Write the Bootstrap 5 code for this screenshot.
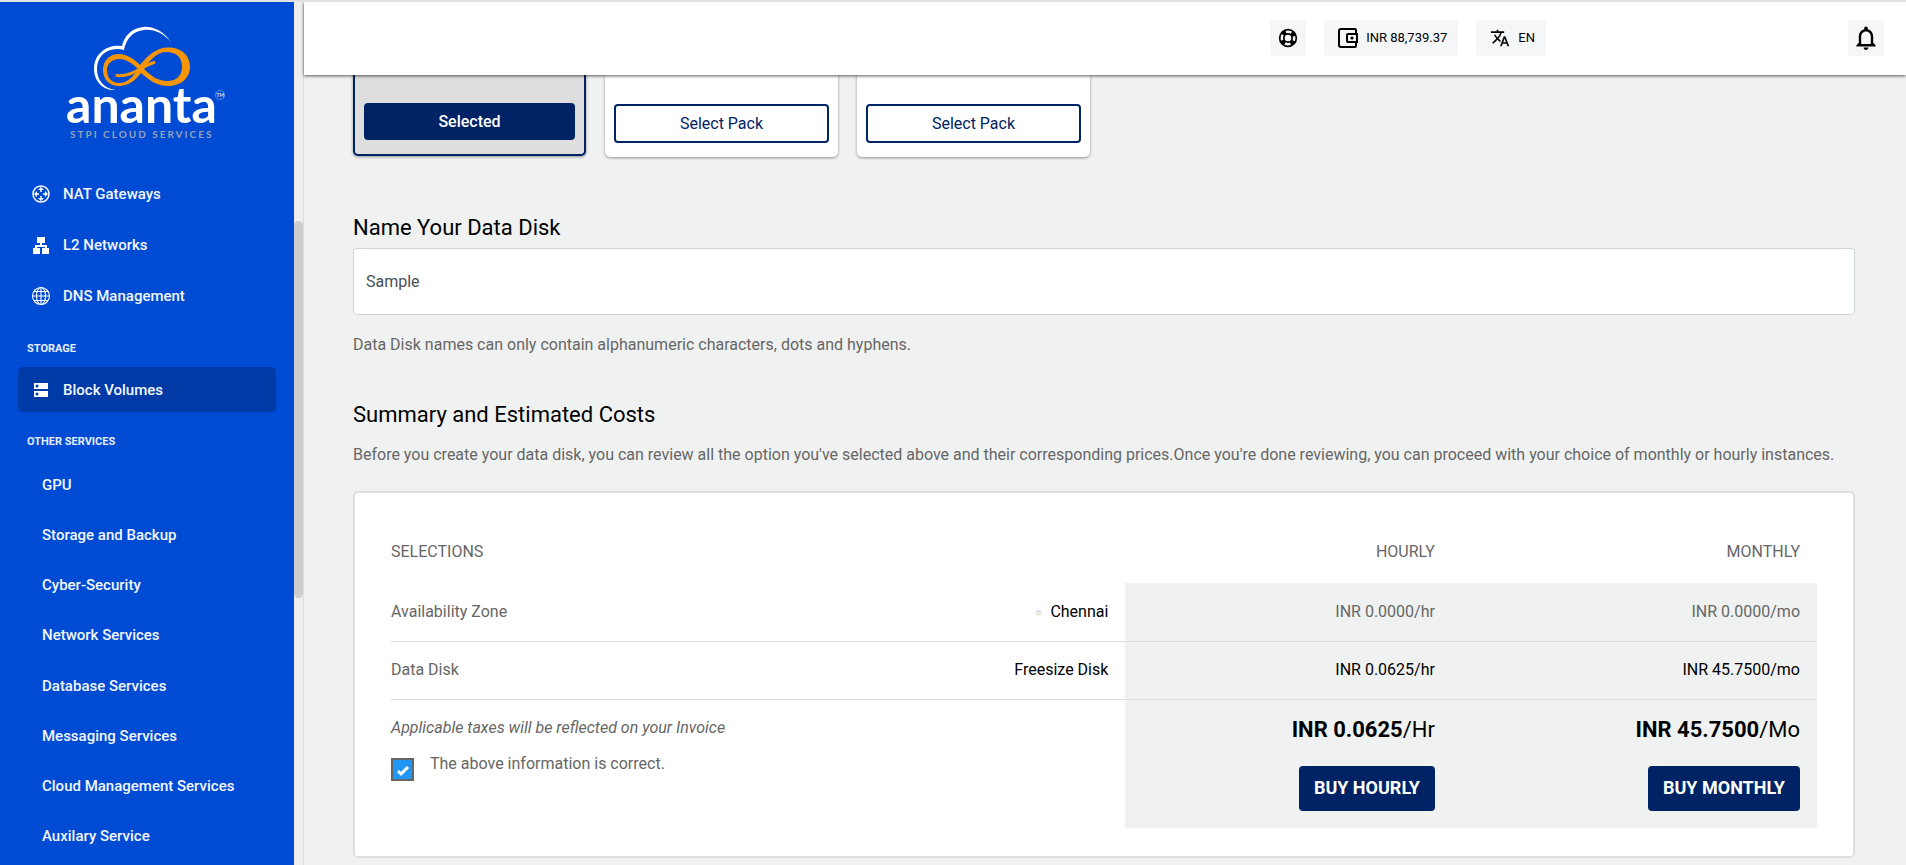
<!DOCTYPE html>
<html lang="en">
<head>
<meta charset="utf-8">
<meta name="viewport" content="width=device-width, initial-scale=1">
<title>Create Data Disk</title>
<link href="https://cdn.jsdelivr.net/npm/bootstrap@5.3.0/dist/css/bootstrap.min.css" rel="stylesheet">
<style>
  :root { --navy: #002366; --line: #dddfde; --canvas: #f0f2f1; --muted-ink: #666; }
  body { font-family: Roboto, "Liberation Sans", sans-serif; font-size: 16px; line-height: 24px; color: #000; background: var(--canvas); border-top: 2px solid #e1e2e1; }
  .side { width: 294px; background: #004bd3; }
  .side a { color: #f2f6ff; text-decoration: none; font-weight: 500; font-size: 15px; }
  .brand { height: 142px; padding-left: 64px; padding-top: 18px; }
  .main-link { height: 51px; padding-left: 31px; }
  .main-link svg, .picked svg { width: 20px; height: 20px; margin-right: 12px; flex: none; }
  .group-title { font-size: 11px; line-height: 16px; font-weight: 700; color: #e6eeff; margin: 0 0 10px 27px; }
  .group-first { margin-top: 4px; }
  .picked { height: 45px; margin: 0 18px 22px; padding-left: 13px; background: #003aa6; border-radius: 5px; }
  .sub-link { padding-left: 42px; }
  .track { width: 10px; background: #eee; border-right: 1px solid #dcdcdc; padding-top: 219px; }
  .thumb { height: 377px; width: 9px; background: #cdcdcd; border-radius: 5px; }
  .topbar { height: 73px; background: #fff; box-shadow: 0 1px 3px rgba(0,0,0,.65); z-index: 2; padding-right: 22px; padding-bottom: 1px; }
  .chip { height: 36px; border: 0; border-radius: 4px; background: #f5f6f8; font-size: 13px; color: #000; padding: 0 11px 0 14px; gap: 8px; }
  .chip svg { width: 20px; height: 20px; }
  .chip-icon { width: 36px; padding: 0; }
  .chip .bell { width: 24px; height: 24px; }
  .chips { gap: 18px; margin-right: 302px; }
  .content { padding: 0 51px 0 49px; }
  .pack { width: 233px; padding: 29px 9px 14px; background: #fff; border-radius: 0 0 5px 5px; box-shadow: 0 1px 3px rgba(0,0,0,.4); }
  .pack-on { border: 2px solid var(--navy); border-top: 0; background: #dedede; padding-top: 28px; }
  .packs { gap: 19px; margin-bottom: 57px; }
  .pack-btn { height: 39px; border: 2px solid var(--navy); border-radius: 4px; background: #fff; color: var(--navy); padding: 0; }
  .pack-on .pack-btn { height: 37px; background: var(--navy); color: #fff; font-weight: 500; }
  .title { font-size: 22px; line-height: 28px; font-weight: 400; margin: 0 0 6px; }
  .name-box { height: 67px; border: 1px solid #ced4da; border-radius: 4px; padding: 0 12px; font-size: 16px; color: #495057; }
  .note { color: var(--muted-ink); font-size: 16px; margin: 0; }
  .note-disk { margin: 18px 0 44px; }
  .title-sum { margin-bottom: 14px; }
  .summary { border: 2px solid var(--line); border-radius: 5px; background: #fff; padding: 36px 36px 28px; }
  .costs { width: 100%; table-layout: fixed; }
  .costs th, .costs td { padding: 0 17px 0 0; text-align: right; font-weight: 400; }
  .costs th:first-child { text-align: left; }
  .costs thead th { height: 54px; color: var(--muted-ink); padding-bottom: 8px; }
  .costs tbody tr { height: 58px; border-bottom: 1px solid var(--line); }
  .costs .price { background: var(--canvas); }
  .costs .soft { color: var(--muted-ink); }
  .costs tfoot td { vertical-align: top; height: 129px; padding-top: 16px; }
  .total { font-size: 22px; line-height: 28px; margin-bottom: 22px; }
  .buy { height: 45px; border: 0; border-radius: 4px; background: var(--navy); color: #fff; font-weight: 700; font-size: 18px; padding: 0 15px; }
  .tick { appearance: none; width: 23px; height: 23px; margin: 6px 16px 0 0; border: 2px solid #666; background: #2196f3 url("data:image/svg+xml,%3Csvg xmlns='http://www.w3.org/2000/svg' viewBox='0 0 19 19'%3E%3Cpath d='M5 11l3 3 7-7' fill='none' stroke='white' stroke-width='3'/%3E%3C/svg%3E"); }
</style>
</head>
<body class="vh-100 overflow-hidden d-flex">
<aside class="side d-flex flex-column flex-shrink-0">
  <a class="brand d-block" href="#" aria-label="Ananta STPI Cloud Services">
    <svg width="166" height="124" viewBox="64 20 166 124" aria-hidden="true">
      <path d="M171 42C163 30 151 26 143 27C132 28 124 36 122 46C109 44 94 52 94 69C94 81 103 91 116 90C104 89 97 80 97 69C97 55 109 46 124 50C126 39 133 31 144 30C155 29 164 34 171 42Z" fill="#fff"/>
      <path fill="#f59506" fill-rule="evenodd" d="M140 65C148 55 157 47.500 168 47.500C181 47.500 190 55 190 67C190 78 181 86 168 86C157 86 149 80 141 73C135 81 128 86 119 86C109 86 103 79 103 70C103 60 110 54 119 54C127 54 134 59 140 65ZM144 69C151 76 158 81 167 81C177 81 182 75 182 67C182 57 176 52 166 52C157 52 150 60 144 69ZM138 69C131 62 125 59 119 59C112 59 107 64 107 70C107 78 112 83 119 83C127 83 133 77 138 69Z"/>
      <path d="M117 75.500C132 77 140 67 154 62.500" fill="none" stroke="#f59506" stroke-width="3" stroke-linecap="round"/>
      <text x="66" y="123" font-family="Lato, sans-serif" font-size="50" font-weight="700" fill="#fff">ananta</text>
      <circle cx="220" cy="95" r="4.500" fill="none" stroke="#7fa5ea" stroke-width=".7"/>
      <text x="216.500" y="97" font-family="Lato, sans-serif" font-size="5" fill="#fff">TM</text>
      <text x="70" y="138" font-family="Lato, sans-serif" font-size="10" font-weight="700" letter-spacing="2" fill="#98a0b3">STPI CLOUD SERVICES</text>
    </svg>
  </a>
  <nav class="d-flex flex-column flex-grow-1">
    <div class="pt-4 pb-3">
      <a class="main-link d-flex align-items-center" href="#"><svg viewBox="0 0 20 20" fill="none" stroke="#fff" stroke-width="1.500"><circle cx="10" cy="10" r="8"/><path d="M10 5v3M10 12v3M5 10h3M12 10h3" /><path fill="#fff" stroke="none" d="M10 3l3 3H7zM10 17l3-3H7zM3 10l3-3v6zM17 10l-3-3v6z"/></svg>NAT Gateways</a>
      <a class="main-link d-flex align-items-center" href="#"><svg viewBox="0 0 20 20" fill="#fff"><path d="M6 2h8v6h-3v2h5v3h2v6h-7v-6h3v-1H6v1h3v6H2v-6h2v-3h5V8H6z"/></svg>L2 Networks</a>
      <a class="main-link d-flex align-items-center" href="#"><svg viewBox="0 0 20 20" fill="none" stroke="#fff" stroke-width="1.100"><circle cx="10" cy="10" r="8.500"/><ellipse cx="10" cy="10" rx="4.500" ry="8.500"/><path d="M10 1.500v17M1.500 10h17M3 5.500h14M3 14.500h14"/></svg>DNS Management</a>
    </div>
    <h2 class="group-title group-first">STORAGE</h2>
    <a class="picked d-flex align-items-center" href="#"><svg viewBox="0 0 20 20" fill="#fff" fill-rule="evenodd"><path d="M3 3h14v6H3zM6 4.500a1.500 1.500 0 100 3 1.500 1.500 0 000-3zM3 11h14v6H3zM6 12.500a1.500 1.500 0 100 3 1.500 1.500 0 000-3z"/></svg>Block Volumes</a>
    <h2 class="group-title">OTHER SERVICES</h2>
    <div class="d-flex flex-column flex-grow-1 pb-1">
      <a class="sub-link flex-fill d-flex align-items-center" href="#">GPU</a>
      <a class="sub-link flex-fill d-flex align-items-center" href="#">Storage and Backup</a>
      <a class="sub-link flex-fill d-flex align-items-center" href="#">Cyber-Security</a>
      <a class="sub-link flex-fill d-flex align-items-center" href="#">Network Services</a>
      <a class="sub-link flex-fill d-flex align-items-center" href="#">Database Services</a>
      <a class="sub-link flex-fill d-flex align-items-center" href="#">Messaging Services</a>
      <a class="sub-link flex-fill d-flex align-items-center" href="#">Cloud Management Services</a>
      <a class="sub-link flex-fill d-flex align-items-center" href="#">Auxilary Service</a>
    </div>
  </nav>
</aside>
<div class="track flex-shrink-0"><div class="thumb"></div></div>
<div class="flex-grow-1 d-flex flex-column">
  <header class="topbar d-flex align-items-center justify-content-end position-relative flex-shrink-0">
    <div class="chips d-flex">
      <button class="chip chip-icon d-flex align-items-center justify-content-center" aria-label="Support"><svg viewBox="0 0 24 24" fill="none" stroke="#000"><circle cx="12" cy="12" r="10" stroke-width="2"/><circle cx="12" cy="12" r="5" stroke-width="2"/><circle cx="12" cy="12" r="7.500" stroke-width="5" stroke-dasharray="5 6.780" stroke-dashoffset="-3.400"/></svg></button>
      <button class="chip d-flex align-items-center"><svg viewBox="2 2 20 20"><path fill="none" stroke="#000" stroke-width="2" d="M20 7V4q0-1-1-1H5Q3 3 3 5v14q0 2 2 2h14q1 0 1-1v-3M12 8h9v8h-9q-1 0-1-1V9q0-1 1-1z"/><circle cx="16" cy="12" r="1.600"/></svg>INR 88,739.37</button>
      <button class="chip d-flex align-items-center"><svg viewBox="0 0 24 24"><path d="M12.870 15.070l-2.540-2.510.03-.03A17.520 17.520 0 0014.070 6H17V4h-7V2H8v2H1v1.990h11.170C11.500 7.920 10.440 9.750 9 11.350 8.070 10.320 7.300 9.190 6.690 8h-2c.73 1.630 1.730 3.170 2.980 4.560l-5.090 5.020L4 19l5-5 3.110 3.110.76-2.040zM18.500 10h-2L12 22h2l1.120-3h4.750L21 22h2l-4.500-12zm-2.620 7l1.620-4.330L19.120 17h-3.240z"/></svg>EN</button>
    </div>
    <button class="chip chip-icon d-flex align-items-center justify-content-center rounded-0" aria-label="Notifications"><svg class="bell" viewBox="2 2 20 20"><path d="M12 22c1.100 0 2-.9 2-2h-4c0 1.100.9 2 2 2zm6-6v-5c0-3.070-1.630-5.640-4.500-6.320V4c0-.83-.67-1.500-1.500-1.500s-1.500.67-1.500 1.500v.68C7.640 5.360 6 7.920 6 11v5l-2 2v1h16v-1l-2-2zm-2 1H8v-6c0-2.480 1.510-4.500 4-4.500s4 2.020 4 4.500v6z"/></svg></button>
  </header>
  <main class="content">
    <div class="packs d-flex align-items-start">
      <div class="pack pack-on"><button class="pack-btn w-100">Selected</button></div>
      <div class="pack"><button class="pack-btn w-100">Select Pack</button></div>
      <div class="pack"><button class="pack-btn w-100">Select Pack</button></div>
    </div>
    <label class="title d-block" for="disk">Name Your Data Disk</label>
    <input class="name-box w-100 d-block" id="disk" type="text" value="Sample">
    <p class="note note-disk">Data Disk names can only contain alphanumeric characters, dots and hyphens.</p>
    <h2 class="title title-sum">Summary and Estimated Costs</h2>
    <p class="note mb-4">Before you create your data disk, you can review all the option you've selected above and their corresponding prices.Once you're done reviewing, you can proceed with your choice of monthly or hourly instances.</p>
    <section class="summary">
      <table class="costs">
        <colgroup><col style="width:27%"><col style="width:24.500%"><col style="width:22.900%"><col></colgroup>
        <thead><tr><th scope="col">SELECTIONS</th><th></th><th scope="col">HOURLY</th><th scope="col">MONTHLY</th></tr></thead>
        <tbody>
          <tr><th class="soft" scope="row">Availability Zone</th><td><svg class="me-2" width="7" height="7" viewBox="0 0 7 7"><circle cx="3.500" cy="3.500" r="3.500" fill="#f1f3f8"/><path d="M1.500 3q2-2 4 0" stroke="#b9c9ee" fill="none"/><path d="M1 5h5" stroke="#f7d3a0"/></svg>Chennai</td><td class="price soft">INR 0.0000/hr</td><td class="price soft">INR 0.0000/mo</td></tr>
          <tr><th class="soft" scope="row">Data Disk</th><td>Freesize Disk</td><td class="price">INR 0.0625/hr</td><td class="price">INR 45.7500/mo</td></tr>
        </tbody>
        <tfoot><tr>
          <td class="soft text-start" colspan="2"><em class="d-block mb-2">Applicable taxes will be reflected on your Invoice</em>
            <div class="d-flex pt-1"><input class="tick" type="checkbox" id="ok" checked><label for="ok">The above information is correct.</label></div></td>
          <td class="price"><div class="total"><b>INR 0.0625</b>/Hr</div><button class="buy">BUY HOURLY</button></td>
          <td class="price"><div class="total"><b>INR 45.7500</b>/Mo</div><button class="buy">BUY MONTHLY</button></td>
        </tr></tfoot>
      </table>
    </section>
  </main>
</div>
<script src="https://cdn.jsdelivr.net/npm/bootstrap@5.3.0/dist/js/bootstrap.bundle.min.js"></script>
</body>
</html>
